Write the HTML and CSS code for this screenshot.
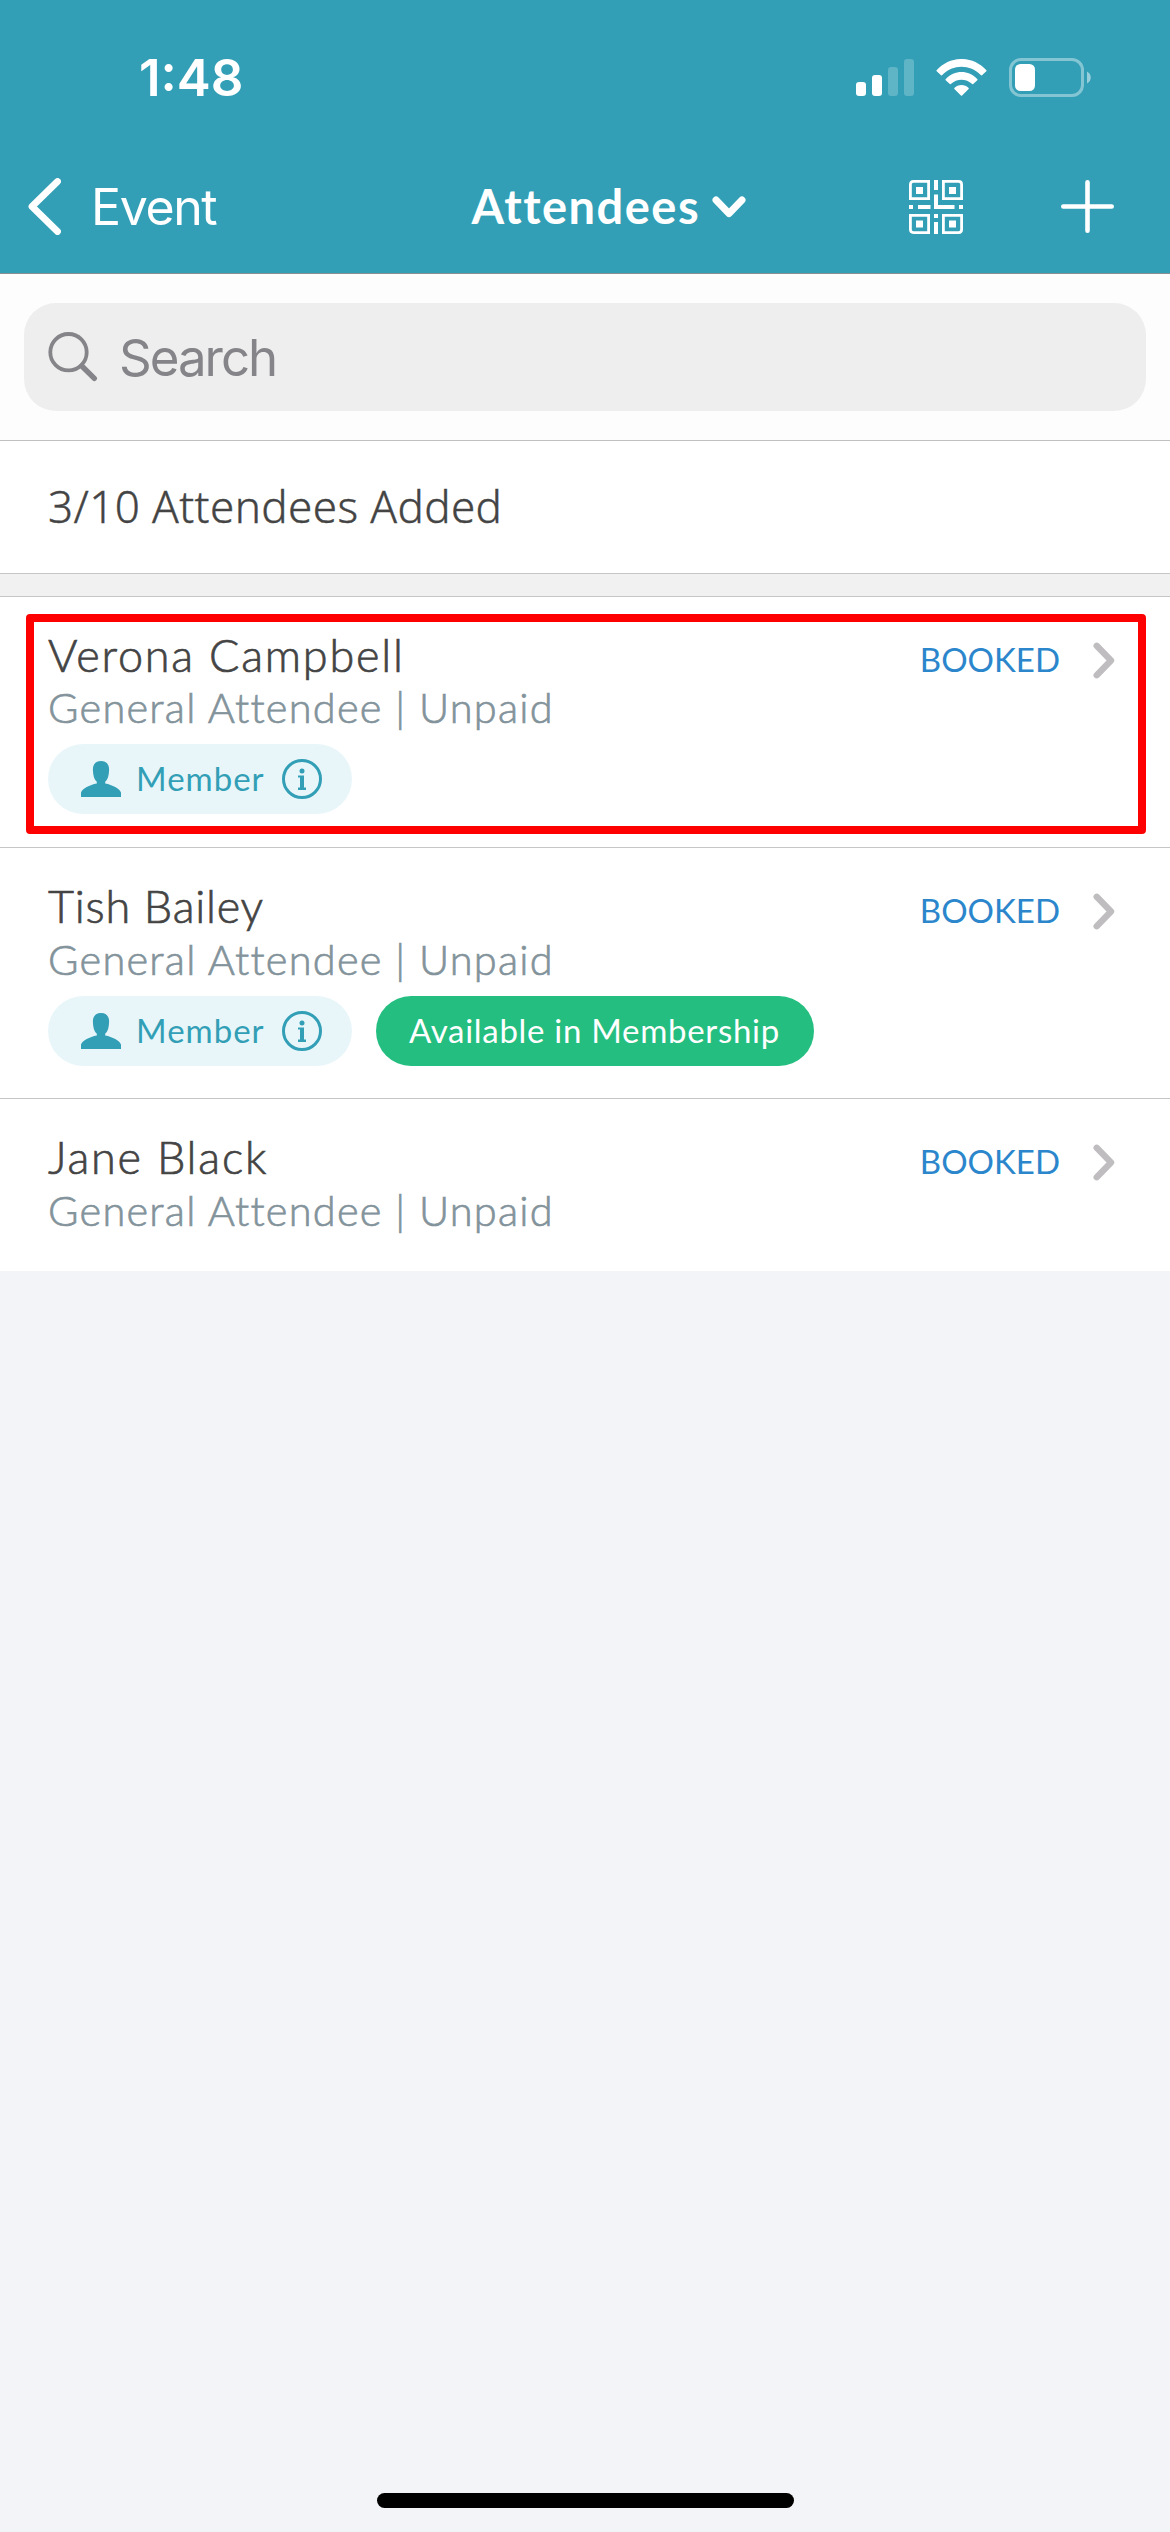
FILE: index.html
```html
<!DOCTYPE html>
<html lang="en">
<head>
<meta charset="utf-8">
<title>Attendees</title>
<link rel="stylesheet" href="styles.css">
</head>
<body>
<svg class="symbols" aria-hidden="true">
  <symbol id="chevron" viewBox="0 0 22 37"><path d="M3.7 3.8L18 18.5L3.7 33.2" fill="none" stroke="#bfbdbf" stroke-width="6.4" stroke-linecap="round" stroke-linejoin="round"/></symbol>
  <symbol id="person" viewBox="0 0 40 36"><path d="M20 0C25.500 0 28.300 3.500 28.100 9C27.900 14.500 27 18.500 24.200 20.800V22.600C31.500 24 38.500 27.500 40 31.500V36H0V31.500C1.500 27.500 8.500 24 15.800 22.600V20.800C13 18.500 12.100 14.500 11.900 9C11.700 3.500 14.500 0 20 0Z" fill="#329fb6"/></symbol>
  <symbol id="info" viewBox="0 0 40 40"><circle cx="20" cy="20" r="18.500" fill="none" stroke="#329fb6" stroke-width="3"/><circle cx="20" cy="12" r="2.500" fill="#329fb6"/><path d="M16 16.500H22V28.500H24V31H16V28.500H18V18.500H16Z" fill="#329fb6"/></symbol>
</svg>
<div class="screen">
  <header class="header">
    <div class="statusbar">
      <span class="time">1:48</span>
      <div class="indicators">
        <svg class="signal" viewBox="0 0 58 37" fill="#fff"><rect y="23" width="10" height="14" rx="3"/><rect x="16" y="16" width="10" height="21" rx="3"/><rect x="32" y="8" width="10" height="29" rx="3" opacity=".22"/><rect x="48" width="10" height="37" rx="3" opacity=".22"/></svg>
        <svg class="wifi" viewBox="0 0 51 37" fill="#fff"><path d="M0.600 11.300C14 -3.800 37 -3.800 50.400 11.300Q50.800 11.800 50.300 12.300L46 16.300Q45.500 16.600 45 16.200C34 4.900 17 4.900 6 16.200Q5.500 16.600 5 16.300L0.700 12.300Q0.200 11.800 0.600 11.300Z"/><path d="M9.600 20.200C18.500 10.500 32.500 10.500 41.400 20.200Q41.800 20.700 41.300 21.200L37.200 25.100Q36.700 25.400 36.200 25C30 19.200 21 19.200 14.800 25Q14.300 25.400 13.800 25.100L9.700 21.200Q9.200 20.700 9.600 20.200Z"/><path d="M18.300 29C22 24.900 29 24.900 32.700 29Q33 29.500 32.600 30L26.100 36.400Q25.500 37 24.900 36.400L18.400 30Q18 29.500 18.300 29Z"/></svg>
        <svg class="battery" viewBox="0 0 83 39"><rect x="1.500" y="1.500" width="72" height="36" rx="10.500" fill="none" stroke="#fff" stroke-width="3" opacity=".4"/><rect x="6" y="6" width="20" height="27" rx="5.500" fill="#fff"/><path d="M78 13.500C83 16 83 23 78 25.500Z" fill="#fff" opacity=".5"/></svg>
      </div>
    </div>
    <nav class="navbar">
      <div class="back">
        <svg class="back-arrow" viewBox="0 0 33 57"><path d="M29.500 3.500L4 28.500L29.500 53.500" fill="none" stroke="#fff" stroke-width="6.800" stroke-linecap="round" stroke-linejoin="round"/></svg>
        <span class="back-label">Event</span>
      </div>
      <div class="title">
        <span class="title-text">Attendees</span>
        <svg class="title-arrow" viewBox="0 0 34 22"><path d="M4 4L17 17.500L30 4" fill="none" stroke="#fff" stroke-width="7" stroke-linecap="round" stroke-linejoin="round"/></svg>
      </div>
      <div class="actions">
        <svg class="qr" viewBox="0 0 54 54" fill="#fff">
          <g fill="none" stroke="#fff" stroke-width="2.800"><path d="M19.600 1.400H4.400Q1.400 1.400 1.400 4.400V18.600H19.600Z"/><path d="M34.400 1.400H49.600Q52.600 1.400 52.600 4.400V18.600H34.400Z"/><path d="M19.600 52.600H4.400Q1.400 52.600 1.400 49.600V35.400H19.600Z"/><path d="M34.400 52.600H49.600Q52.600 52.600 52.600 49.600V35.400H34.400Z"/></g>
          <path d="M7 7h7v7H7zM40 7h7v7H40zM7 40.500h7v7H7zM40 40.500h7v7H40zM25 0h4v10H25zM25 14.500h4V25H45.500v4H25zM9 25H21.500v4H9zM0 25H4v4H0zM50 25h4v4H50zM25 34h4v4H25zM25 42h4V54H25z"/>
        </svg>
        <svg class="plus" viewBox="0 0 53 53"><path d="M26.500 2.300V50.700M2.300 26.500H50.700" stroke="#fff" stroke-width="4.600" stroke-linecap="round"/></svg>
      </div>
    </nav>
  </header>

  <div class="search">
    <div class="search-field">
      <svg class="search-icon" viewBox="0 0 50 50" fill="none" stroke="#858589"><circle cx="20.500" cy="20.200" r="18.200" stroke-width="3.800"/><path d="M33.800 34L46.300 46.300" stroke-width="5.400" stroke-linecap="round"/></svg>
      <span class="search-text">Search</span>
    </div>
  </div>

  <div class="summary">3/10 Attendees Added</div>
  <div class="divider"></div>

  <main class="list">
    <section class="row">
      <div class="person">
        <div class="name name-wide">Verona Campbell</div>
        <div class="detail">General Attendee | Unpaid</div>
        <div class="tags">
          <span class="tag tag-member"><svg class="tag-person"><use href="#person"/></svg><span class="tag-label">Member</span><svg class="tag-info"><use href="#info"/></svg></span>
        </div>
      </div>
      <div class="state"><span class="booked">BOOKED</span><svg class="chevron"><use href="#chevron"/></svg></div>
      <div class="highlight"></div>
    </section>
    <section class="row row-next">
      <div class="person">
        <div class="name">Tish Bailey</div>
        <div class="detail">General Attendee | Unpaid</div>
        <div class="tags">
          <span class="tag tag-member"><svg class="tag-person"><use href="#person"/></svg><span class="tag-label">Member</span><svg class="tag-info"><use href="#info"/></svg></span>
          <span class="tag tag-available">Available in Membership</span>
        </div>
      </div>
      <div class="state"><span class="booked">BOOKED</span><svg class="chevron"><use href="#chevron"/></svg></div>
    </section>
    <section class="row row-next row-last">
      <div class="person">
        <div class="name name-wide">Jane Black</div>
        <div class="detail">General Attendee | Unpaid</div>
      </div>
      <div class="state"><span class="booked">BOOKED</span><svg class="chevron"><use href="#chevron"/></svg></div>
    </section>
  </main>
  <div class="home-indicator"></div>
</div>
</body>
</html>
```
FILE: styles.css
```css
* { box-sizing: border-box; }
body { margin: 0; background: #f3f4f7; }
svg { display: block; flex: none; }
.symbols { position: absolute; width: 0; height: 0; }

.screen {
  width: 1170px;
  height: 2532px;
  display: flex;
  flex-direction: column;
  background: #f3f4f7;
  font-family: Lato, "Liberation Sans", sans-serif;
  white-space: nowrap;
  overflow: hidden;
}

/* Header */
.header { height: 274px; background: #329fb6; border-bottom: 1px solid #8a8f92; color: #fff; }
.statusbar { height: 155px; padding: 0 78px 0 139px; display: flex; align-items: center; justify-content: space-between; }
.time { font: 600 51px/60px Inter, sans-serif; }
.indicators { display: flex; align-items: center; gap: 22px; }
.signal { width: 58px; height: 37px; }
.wifi { width: 51px; height: 37px; }
.battery { width: 83px; height: 39px; }
.navbar { height: 103px; padding: 0 56px 0 28px; display: grid; grid-template-columns: 443.5px 1fr auto; align-items: center; }
.back { display: flex; align-items: center; gap: 30px; }
.back-arrow { width: 33px; height: 57px; }
.back-label { font: 400 50px/60px Inter, sans-serif; letter-spacing: -1.4px; }
.title { display: flex; align-items: center; gap: 12px; }
.title-text { padding-bottom: 2px; font-size: 47px; line-height: 60px; font-weight: 700; letter-spacing: 1.5px; }
.title-arrow { width: 34px; height: 22px; }
.actions { display: flex; align-items: center; gap: 98px; }
.qr { width: 54px; height: 54px; }
.plus { width: 53px; height: 53px; }

/* Search */
.search { height: 167px; padding: 29px 24px; background: #fdfdfd; border-bottom: 1px solid #c0c0c0; }
.search-field { height: 108px; padding-left: 24px; display: flex; align-items: center; gap: 21px; border-radius: 32px; background: #eee; color: #858589; }
.search-icon { width: 50px; height: 50px; }
.search-text { padding-top: 2px; font: 400 51px/60px Inter, sans-serif; letter-spacing: -2px; }

/* Summary */
.summary {
  height: 133px;
  padding: 2px 48px 0;
  border-bottom: 1px solid #c6c6c6;
  background: #fff;
  color: #444;
  font-family: "Noto Sans", sans-serif;
  font-size: 44px;
  line-height: 127px;
  font-weight: 300;
  letter-spacing: .4px;
  -webkit-text-stroke: .4px currentColor;
}
.divider { height: 23px; background: #f1f1f1; border-bottom: 1px solid #c6c6c6; }

/* Attendee rows */
.row { position: relative; height: 251px; padding: 32px 55px 0 48px; display: flex; justify-content: space-between; border-bottom: 1px solid #c6c6c6; background: #fff; }
.row-last { height: 172px; border-bottom: 0; }
.name { color: #444; font-size: 45px; line-height: 52px; font-weight: 300; letter-spacing: .75px; -webkit-text-stroke: .7px currentColor; }
.name-wide { letter-spacing: 1.8px; }
.detail { color: #83939b; font-size: 41.5px; line-height: 52px; font-weight: 300; letter-spacing: 1.25px; -webkit-text-stroke: .7px currentColor; }
.row-next .detail { margin-top: 1px; }
.tags { margin-top: 11px; display: flex; gap: 24px; }
.tag { height: 70px; padding-bottom: 3px; display: flex; align-items: center; border-radius: 35px; font-size: 33px; line-height: 66px; letter-spacing: .7px; }
.tag-member { width: 304px; padding-left: 33px; background: #e8f6fa; color: #329fb6; }
.tag-label { width: 146px; margin-left: 15px; letter-spacing: 1px; }
.tag-person { width: 40px; height: 36px; margin-top: 2px; }
.tag-info { width: 40px; height: 40px; margin-top: 2px; }
.tag-available { width: 438px; padding-left: 33px; background: #23be80; color: #fff; }
.state { height: 62px; display: flex; align-items: center; gap: 33px; }
.booked { padding-bottom: 2px; color: #2b86cc; font-size: 33px; line-height: 56px; }
.chevron { width: 22px; height: 37px; }
.highlight { position: absolute; left: 26px; top: 17px; width: 1120px; height: 220px; border: 8px solid #f00; border-radius: 4px; }

.home-indicator { width: 417px; height: 15px; margin: auto auto 24px; border-radius: 8px; background: #000; }
```
